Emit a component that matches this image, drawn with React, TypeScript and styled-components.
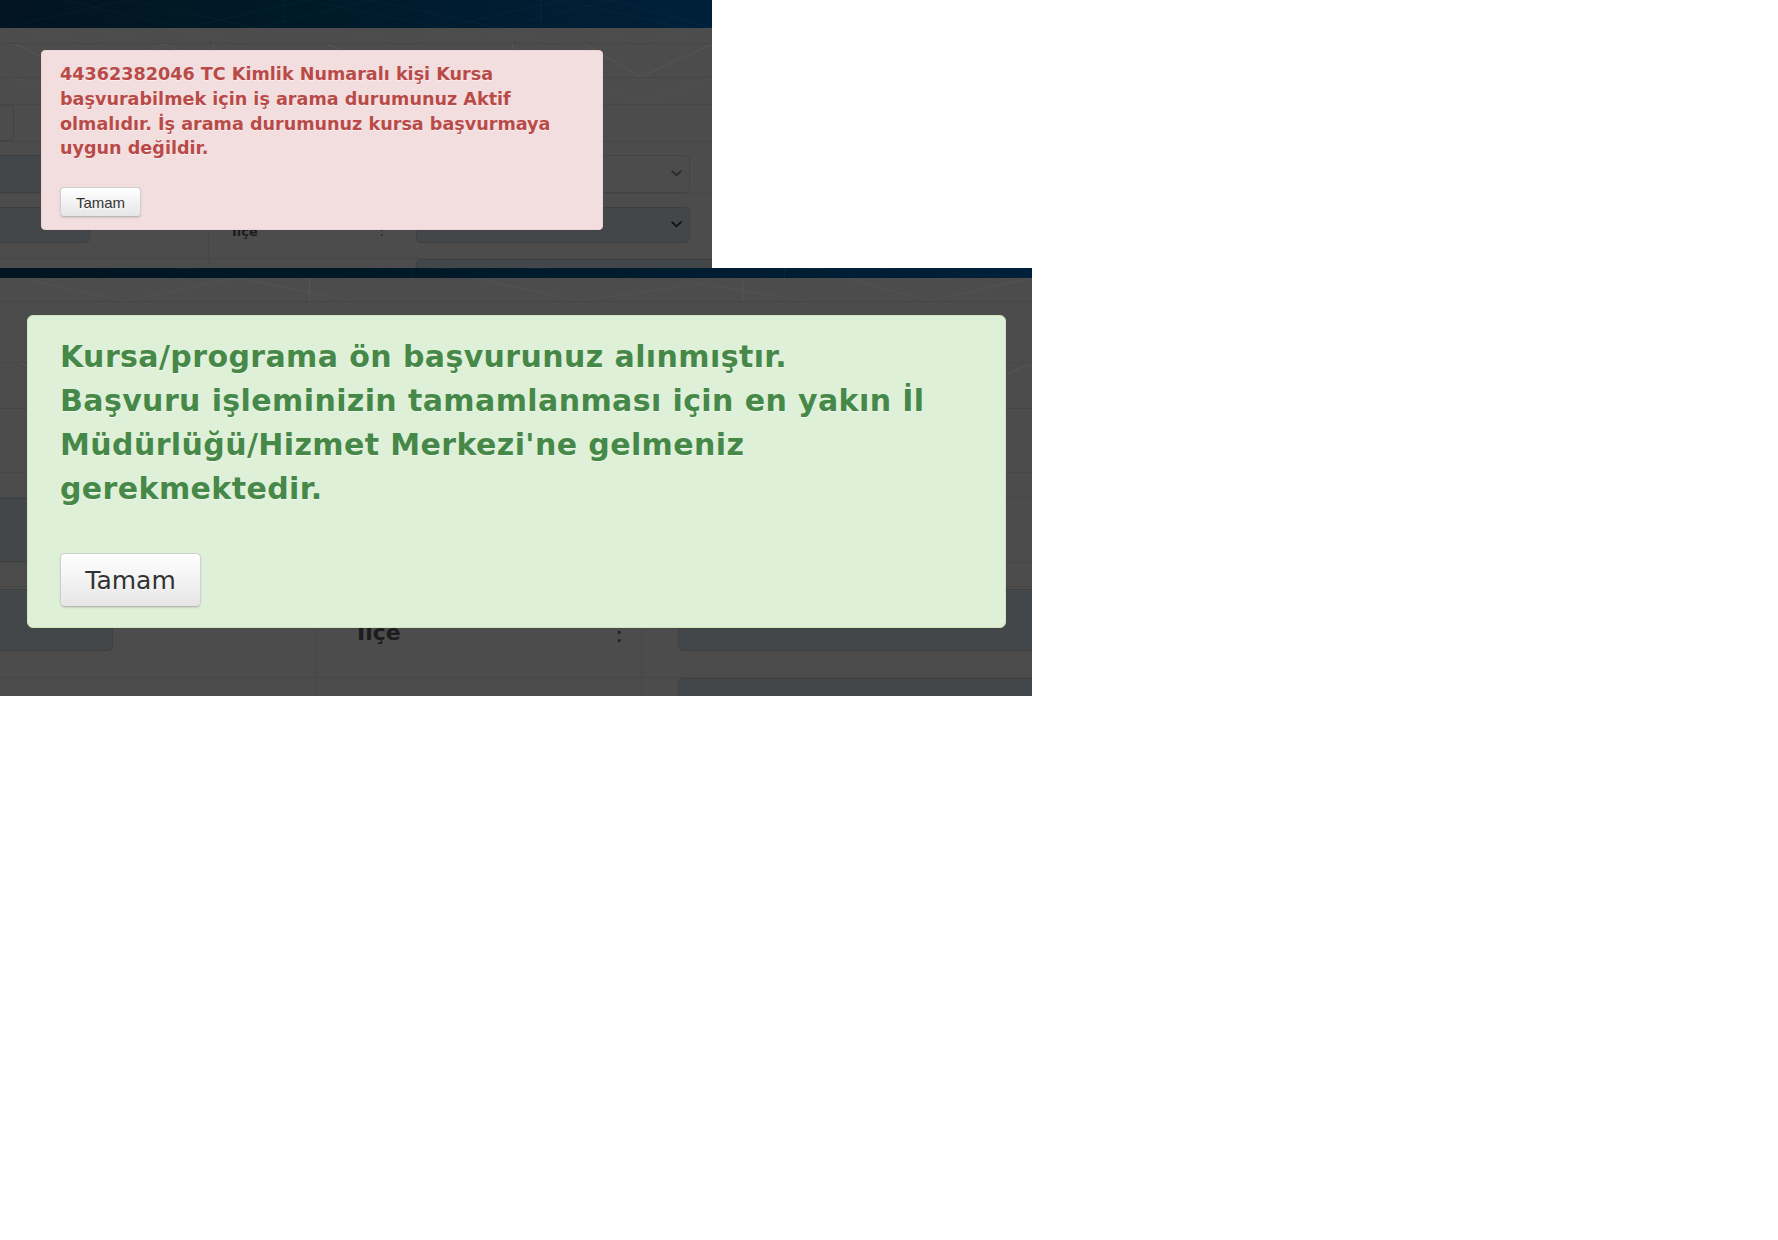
import React from 'react';
import styled, { createGlobalStyle } from 'styled-components';

const Global = createGlobalStyle`
  html, body { margin: 0; padding: 0; background: #ffffff; }
  body { font-family: "DejaVu Sans", Verdana, sans-serif; }
  *, *::before, *::after { box-sizing: border-box; }
`;

const Page = styled.main`
  width: 1778px;
  min-height: 1240px;
  background: #ffffff;
  display: flex;
  flex-direction: column;
  align-items: flex-start;
`;

const Shot = styled.section<{ $w: number; $h: number }>`
  position: relative;
  width: ${(p) => p.$w}px;
  height: ${(p) => p.$h}px;
  overflow: hidden;
  background: #4c4c4c;
  display: flex;
  flex-direction: column;
  flex: none;
`;

const NavBar = styled.header<{ $h: number }>`
  flex: none;
  height: ${(p) => p.$h}px;
  background: linear-gradient(90deg, #021520 0%, #001a29 45%, #00203a 100%);
  overflow: hidden;
  svg { display: block; width: 100%; height: 100%; }
`;

const Band = styled.div<{ $h: number; $line?: string }>`
  flex: none;
  height: ${(p) => p.$h}px;
  border-bottom: 1px solid ${(p) => p.$line ?? '#464646'};
  overflow: hidden;
  svg { display: block; width: 100%; height: 100%; }
`;

const Spacer = styled.div<{ $h: number }>`
  flex: none;
  height: ${(p) => p.$h}px;
`;

const FormRow = styled.div<{ $h: number; $cols: string; $top?: boolean; $bottom?: boolean }>`
  flex: none;
  height: ${(p) => p.$h}px;
  display: grid;
  grid-template-columns: ${(p) => p.$cols};
  border-top: ${(p) => (p.$top ? '1px solid #464646' : 'none')};
  border-bottom: ${(p) => (p.$bottom ? '1px solid #464646' : 'none')};
`;

const Cell = styled.div<{ $divider?: boolean; $pl?: number; $pr?: number; $justify?: string; $align?: string }>`
  display: flex;
  align-items: ${(p) => p.$align ?? 'center'};
  justify-content: ${(p) => p.$justify ?? 'flex-start'};
  padding-left: ${(p) => p.$pl ?? 0}px;
  padding-right: ${(p) => p.$pr ?? 0}px;
  border-left: ${(p) => (p.$divider ? '1px solid #474747' : 'none')};
  min-width: 0;
`;

const Field = styled.div<{ $w: string; $h: number; $filled?: boolean; $bleed?: boolean; $chevronPad?: number }>`
  width: ${(p) => p.$w};
  height: ${(p) => p.$h}px;
  flex: none;
  background: ${(p) => (p.$filled ? '#43474a' : 'transparent')};
  border: 1px solid ${(p) => (p.$filled ? '#3d4043' : '#434343')};
  border-left: ${(p) => (p.$bleed ? 'none' : undefined)};
  border-radius: ${(p) => (p.$bleed ? '0 5px 5px 0' : '5px')};
  display: flex;
  align-items: center;
  justify-content: flex-end;
  padding-right: ${(p) => p.$chevronPad ?? 6}px;
`;

const Label = styled.span<{ $size: number; $shift?: number }>`
  font-family: "DejaVu Sans", Verdana, sans-serif;
  font-weight: bold;
  font-size: ${(p) => p.$size}px;
  color: #1c1c1c;
  transform: translateY(${(p) => p.$shift ?? 0}px);
`;

const Colon = styled(Label)`
  font-weight: normal;
`;

const Alert = styled.div<{ $tone: 'danger' | 'success'; $left: number; $top: number; $w: number; $pad: string; $radius: number }>`
  position: absolute;
  left: ${(p) => p.$left}px;
  top: ${(p) => p.$top}px;
  width: ${(p) => p.$w}px;
  padding: ${(p) => p.$pad};
  border-radius: ${(p) => p.$radius}px;
  background: ${(p) => (p.$tone === 'danger' ? '#f2dede' : '#dff0d8')};
  border: 1px solid ${(p) => (p.$tone === 'danger' ? '#eed3d7' : '#d1e4bd')};
  color: ${(p) => (p.$tone === 'danger' ? '#b94a48' : '#468847')};
  text-shadow: 0 1px 0 rgba(255, 255, 255, 0.5);
  display: flex;
  flex-direction: column;
  align-items: flex-start;
`;

const Message = styled.div<{ $size: number; $lh: number; $gap: number; $ls?: number }>`
  font-family: "DejaVu Sans", Verdana, sans-serif;
  font-weight: bold;
  font-size: ${(p) => p.$size}px;
  line-height: ${(p) => p.$lh}px;
  letter-spacing: ${(p) => p.$ls ?? 0}px;
  margin-bottom: ${(p) => p.$gap}px;
`;

const Line = styled.span`
  display: block;
  white-space: nowrap;
`;

const OkButton = styled.button<{ $big?: boolean }>`
  font-family: ${(p) => (p.$big ? '"DejaVu Sans", Verdana, sans-serif' : '"Liberation Sans", Arial, sans-serif')};
  font-size: ${(p) => (p.$big ? 25 : 15)}px;
  width: ${(p) => (p.$big ? 141 : 81)}px;
  height: ${(p) => (p.$big ? 54 : 30)}px;
  padding: 0;
  color: #333333;
  text-shadow: 0 1px 1px rgba(255, 255, 255, 0.75);
  background: linear-gradient(#ffffff, #e6e6e6);
  border: 1px solid #cfcfcf;
  border-bottom-color: #b8b8b8;
  border-radius: ${(p) => (p.$big ? 5 : 4)}px;
  box-shadow: inset 0 1px 0 rgba(255, 255, 255, 0.3), 0 1px 2px rgba(0, 0, 0, 0.12);
  cursor: pointer;
  display: flex;
  align-items: center;
  justify-content: center;
`;

const Chevron = ({ color, size }: { color: string; size: number }) => (
  <svg width={size} height={size * 0.6} viewBox="0 0 10 6" fill="none">
    <path d="M1 1l4 4 4-4" stroke={color} strokeWidth="1.6" strokeLinecap="round" strokeLinejoin="round" />
  </svg>
);

const NavPattern = () => (
  <svg viewBox="0 0 1000 40" preserveAspectRatio="none">
    <g stroke="rgba(120,170,210,0.07)" strokeWidth="1" fill="none">
      <path d="M0 40 L180 0 L360 40 L520 0 L700 40 L860 0 L1000 40" />
      <path d="M90 0 L260 40 L430 0 L620 40 L790 0 L960 40" />
      <path d="M400 0 L400 40 M760 0 L760 40" />
    </g>
  </svg>
);

const BandPattern = ({ opacity = 0.08 }: { opacity?: number }) => (
  <svg viewBox="0 0 1000 40" preserveAspectRatio="none">
    <g stroke={`rgba(255,255,255,${opacity})`} strokeWidth="1" fill="none">
      <path d="M20 0 L120 40 L230 0 L340 40 M300 0 L300 40" />
      <path d="M460 0 L560 40 L680 10 L780 40 M720 0 L720 40" />
      <path d="M820 0 L900 40 L1000 0" />
    </g>
  </svg>
);

const dangerLines = [
  '44362382046 TC Kimlik Numaralı kişi Kursa',
  'başvurabilmek için iş arama durumunuz Aktif',
  'olmalıdır. İş arama durumunuz kursa başvurmaya',
  'uygun değildir.',
];

const successLines = [
  'Kursa/programa ön başvurunuz alınmıştır.',
  'Başvuru işleminizin tamamlanması için en yakın İl',
  "Müdürlüğü/Hizmet Merkezi'ne gelmeniz",
  'gerekmektedir.',
];

const TopShot = () => (
  <Shot $w={712} $h={268}>
    <NavBar $h={28}>
      <NavPattern />
    </NavBar>
    <Band $h={16}><BandPattern opacity={0.04} /></Band>
    <Band $h={34}><BandPattern /></Band>
    <Band $h={26} $line="transparent"><BandPattern opacity={0.05} /></Band>
    <FormRow $h={38} $cols="14px 1fr" $top $bottom>
      <Cell $align="stretch"><Field $w="14px" $h={36} $bleed /></Cell>
      <Cell />
    </FormRow>
    <Spacer $h={12} />
    <FormRow $h={40} $cols="208px 184px 1fr" $bottom>
      <Cell><Field $w="190px" $h={38} $filled $bleed /></Cell>
      <Cell />
      <Cell $pl={24}><Field $w="274px" $h={38} $chevronPad={7}><Chevron color="#2a2a2a" size={11} /></Field></Cell>
    </FormRow>
    <Spacer $h={12} />
    <FormRow $h={37} $cols="208px 184px 1fr">
      <Cell><Field $w="90px" $h={36} $filled $bleed /></Cell>
      <Cell $divider $pl={23} $pr={8} $justify="space-between">
        <Label $size={13} $shift={7}>İlçe</Label>
        <Colon $size={13} $shift={7}>:</Colon>
      </Cell>
      <Cell $pl={24}><Field $w="274px" $h={36} $filled $chevronPad={7}><Chevron color="#111" size={11} /></Field></Cell>
    </FormRow>
    <FormRow $h={15} $cols="208px 184px 1fr">
      <Cell />
      <Cell $divider />
      <Cell />
    </FormRow>
    <FormRow $h={12} $cols="208px 184px 1fr" $top>
      <Cell />
      <Cell $divider />
      <Cell $pl={24} $align="stretch"><Field $w="300px" $h={14} $filled /></Cell>
    </FormRow>
    <Alert $tone="danger" $left={41} $top={50} $w={562} $pad="11px 18px 12px 18px" $radius={4}>
      <Message $size={17.6} $lh={24.8} $gap={26}>
        {dangerLines.map((l) => <Line key={l}>{l}</Line>)}
      </Message>
      <OkButton>Tamam</OkButton>
    </Alert>
  </Shot>
);

const BottomShot = () => (
  <Shot $w={1032} $h={428}>
    <NavBar $h={10}>
      <NavPattern />
    </NavBar>
    <Band $h={24}><BandPattern opacity={0.06} /></Band>
    <Band $h={61} $line="#484848" />
    <Band $h={46} $line="#444444"><BandPattern opacity={0.05} /></Band>
    <Band $h={64} $line="#464646" />
    <Band $h={25} $line="#464646" />
    <FormRow $h={65} $cols="318px 325px 1fr" $bottom>
      <Cell><Field $w="300px" $h={64} $filled $bleed /></Cell>
      <Cell />
      <Cell />
    </FormRow>
    <FormRow $h={24} $cols="318px 325px 1fr" $bottom>
      <Cell />
      <Cell $divider />
      <Cell $divider />
    </FormRow>
    <Spacer $h={2} />
    <FormRow $h={62} $cols="316px 325px 1fr">
      <Cell><Field $w="113px" $h={62} $filled $bleed /></Cell>
      <Cell $divider $pl={40} $pr={18} $justify="space-between">
        <Label $size={22} $shift={12}>İlçe</Label>
        <Colon $size={22} $shift={14}>:</Colon>
      </Cell>
      <Cell $divider $pl={36}><Field $w="400px" $h={62} $filled /></Cell>
    </FormRow>
    <FormRow $h={26} $cols="316px 325px 1fr">
      <Cell />
      <Cell $divider />
      <Cell $divider />
    </FormRow>
    <FormRow $h={20} $cols="316px 325px 1fr" $top>
      <Cell />
      <Cell $divider />
      <Cell $divider $pl={36} $align="flex-start"><Field $w="400px" $h={40} $filled /></Cell>
    </FormRow>
    <Alert $tone="success" $left={27} $top={47} $w={979} $pad="19px 32px 20px 32px" $radius={6}>
      <Message $size={30} $lh={44} $gap={42} $ls={0.4}>
        {successLines.map((l) => <Line key={l}>{l}</Line>)}
      </Message>
      <OkButton $big>Tamam</OkButton>
    </Alert>
  </Shot>
);

export default function App() {
  return (
    <>
      <Global />
      <Page>
        <TopShot />
        <BottomShot />
      </Page>
    </>
  );
}
